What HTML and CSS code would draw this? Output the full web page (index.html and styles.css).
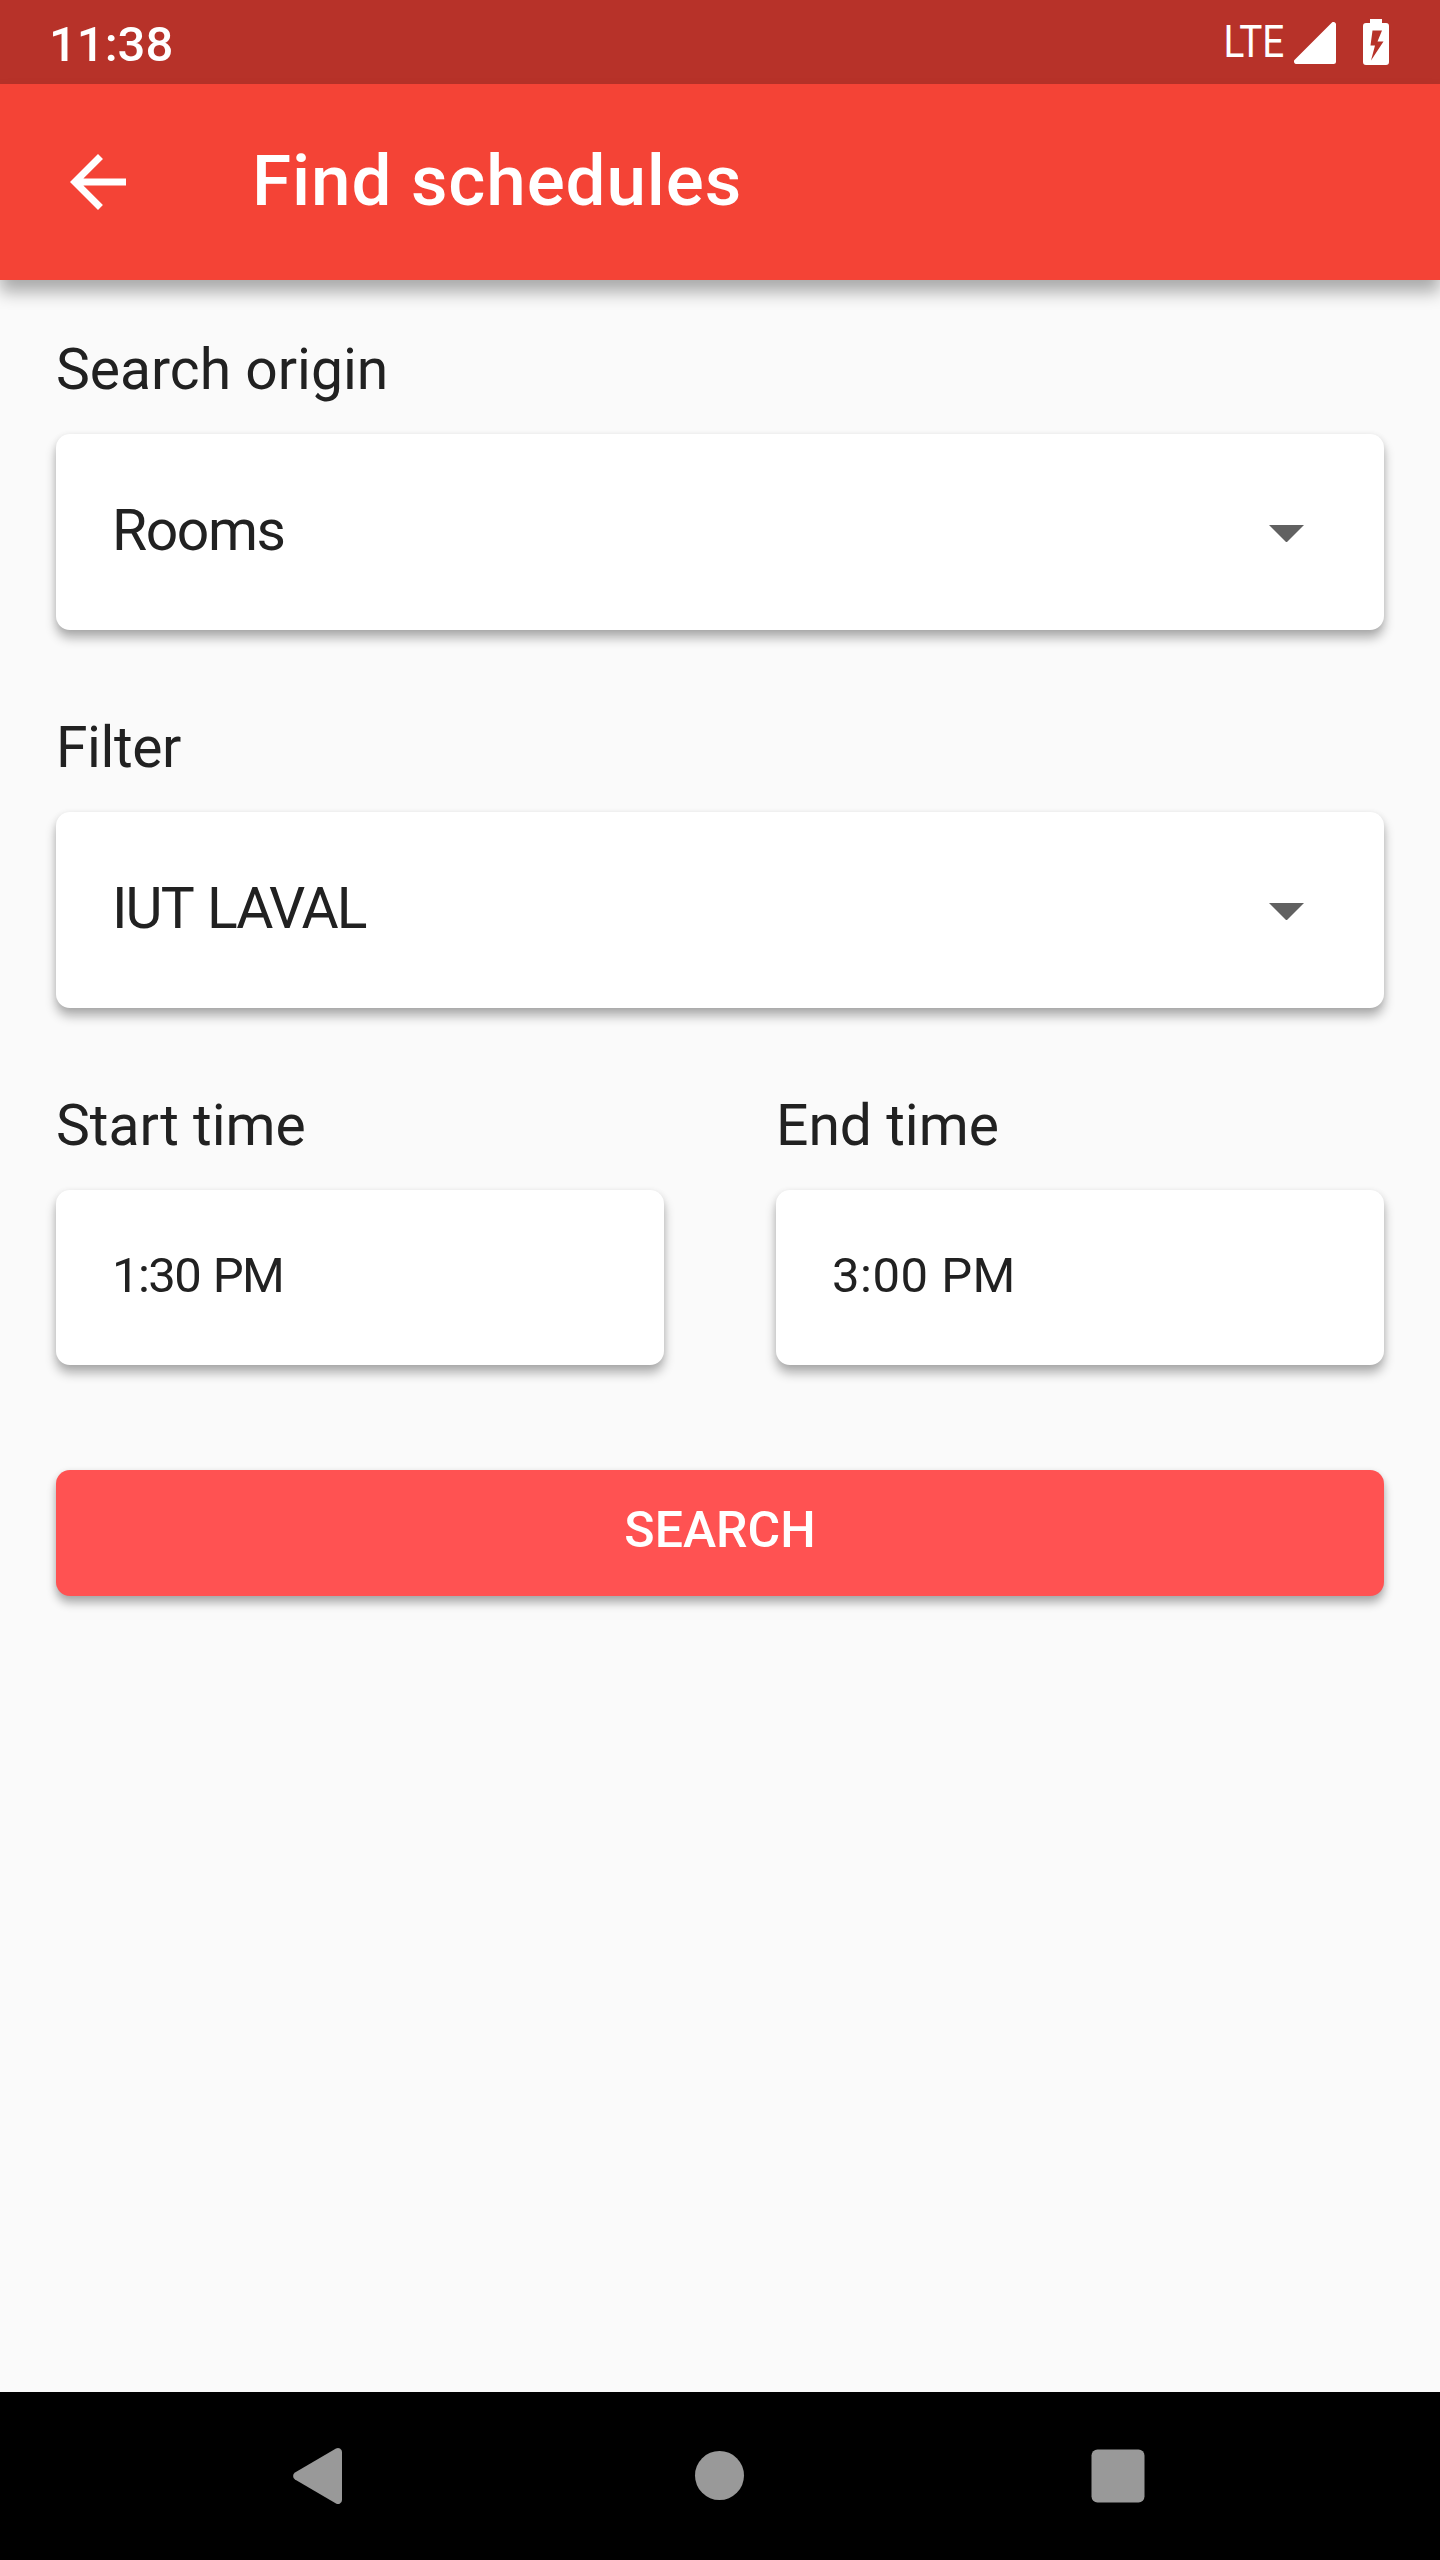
FILE: index.html
```html
<!DOCTYPE html>
<html lang="en">
  <head>
    <meta charset="UTF-8" />
    <meta name="viewport" content="width=device-width, initial-scale=1.0" />
    <title>Find schedules</title>
    <link rel="stylesheet" href="styles.css">
  </head>
  <body>
    <div class="status-bar">
      <span class="clock">11:38</span>
      <div class="status-icons">
        <span class="network">LTE</span>
        <svg class="signal" viewBox="0 0 42 42">
          <path d="M42 2.5V39.500a2.500 2.500 0 0 1-2.500 2.500H2.500a2.500 2.500 0 0 1-1.800-4.300L37.700 0.700a2.500 2.500 0 0 1 4.300 1.800z" />
        </svg>
        <svg class="battery" viewBox="0 0 26 46">
          <path fill-rule="evenodd" d="M7 0h12v4h4a3 3 0 0 1 3 3v36a3 3 0 0 1-3 3H3a3 3 0 0 1-3-3V7a3 3 0 0 1 3-3h4zM9.500 11.500L7.500 26.500H12L8 41.500L20.500 22.500H14.500L19 11.500z" />
        </svg>
      </div>
    </div>

    <header class="app-bar">
      <button type="button" class="back" aria-label="Back">
        <svg viewBox="0 0 24 24">
          <path d="M20 11H7.830l5.590-5.590L12 4l-8 8 8 8 1.410-1.410L7.830 13H20v-2z" />
        </svg>
      </button>
      <h1 class="title">Find schedules</h1>
    </header>

    <main class="form">
      <div class="field">
        <span class="label">Search origin</span>
        <div class="card select">
          <span class="room">Rooms</span>
          <svg class="arrow" viewBox="0 0 35 17.500"><path d="M0 0h35L17.500 17.500z" /></svg>
        </div>
      </div>

      <div class="field">
        <span class="label filter">Filter</span>
        <div class="card select">
          <span class="site">IUT LAVAL</span>
          <svg class="arrow" viewBox="0 0 35 17.500"><path d="M0 0h35L17.500 17.500z" /></svg>
        </div>
      </div>

      <div class="times">
        <div class="field">
          <span class="label">Start time</span>
          <div class="card time start">1:30 PM</div>
        </div>
        <div class="field">
          <span class="label">End time</span>
          <div class="card time end">3:00 PM</div>
        </div>
      </div>

      <button type="button" class="search">SEARCH</button>
    </main>

    <nav class="nav-bar">
      <svg viewBox="0 0 84 84">
        <path d="M63 18V66a4 4 0 0 1-6 3.400L16 45.400a4 4 0 0 1 0-6.800L57 14.600a4 4 0 0 1 6 3.400z" />
      </svg>
      <svg viewBox="0 0 84 84"><circle cx="41.500" cy="41.500" r="24.500" /></svg>
      <svg viewBox="0 0 84 84"><rect x="14.500" y="15.500" width="53" height="53" rx="6" /></svg>
    </nav>
  </body>
</html>
```
FILE: styles.css
```css
* {
  box-sizing: border-box;
}

body {
  margin: 0;
  height: 2560px;
  display: flex;
  flex-direction: column;
  background-color: #fafafa;
  color: #212121;
  font-family: Roboto, sans-serif;
}

svg {
  display: block;
  fill: currentColor;
}

button {
  border: none;
  padding: 0;
  color: #fff;
  font-family: inherit;
}

.status-bar {
  display: flex;
  justify-content: space-between;
  align-items: center;
  height: 84px;
  padding: 0 51px 0 49px;
  background-color: #b73229;
  color: #fff;
}

.clock {
  padding-top: 4px;
  font-size: 49px;
  font-weight: 500;
}

.status-icons {
  display: flex;
  align-items: center;
}

.network {
  font-size: 43.5px;
  transform: scaleX(0.89);
  transform-origin: right;
  margin-right: 10px;
}

.signal {
  width: 42px;
  height: 42px;
  margin: 2px 27px 0 0;
}

.battery {
  width: 26px;
  height: 46px;
}

.app-bar {
  display: flex;
  align-items: center;
  height: 196px;
  padding-left: 56px;
  background-color: #f44336;
  color: #fff;
  box-shadow: 0 12px 16px rgba(0, 0, 0, 0.32);
}

.back {
  background: none;
}

.back svg {
  width: 84px;
  height: 84px;
}

.title {
  margin: 0 0 0 112px;
  padding-bottom: 3px;
  font-size: 71px;
  font-weight: 500;
  letter-spacing: 0.9px;
}

.form {
  flex: 1;
  padding: 56px 56px 0;
}

.field {
  display: flex;
  flex-direction: column;
  gap: 31px;
  margin-bottom: 84px;
}

.label {
  font-size: 57px;
  line-height: 67px;
}

.filter {
  letter-spacing: -0.4px;
}

.card {
  display: flex;
  align-items: center;
  background-color: #fff;
  border-radius: 14px;
  box-shadow: 0 8px 11px rgba(0, 0, 0, 0.3), 0 1px 6px rgba(0, 0, 0, 0.08);
}

.select {
  justify-content: space-between;
  height: 196px;
  padding: 0 80px 0 56px;
  font-size: 57px;
}

.select span {
  padding-bottom: 3px;
}

.room {
  letter-spacing: -1.4px;
}

.site {
  letter-spacing: -1.9px;
  word-spacing: 3px;
}

.arrow {
  width: 35px;
  height: 17.5px;
  margin-top: 3px;
  color: #616161;
}

.times {
  display: grid;
  grid-template-columns: 1fr 1fr;
  gap: 112px;
}

.times .field {
  margin-bottom: 105px;
}

.time {
  height: 175px;
  padding: 0 56px 4px;
  font-size: 49px;
}

.start {
  letter-spacing: -1.6px;
  word-spacing: 2px;
}

.end {
  letter-spacing: 0.5px;
}

.search {
  display: block;
  width: 100%;
  height: 126px;
  padding-bottom: 6px;
  border-radius: 14px;
  background-color: #ff5252;
  box-shadow: 0 7px 10px rgba(0, 0, 0, 0.3), 0 1px 6px rgba(0, 0, 0, 0.08);
  font-size: 50px;
  font-weight: 500;
}

.nav-bar {
  display: flex;
  justify-content: center;
  align-items: center;
  gap: 315px;
  height: 168px;
  background-color: #000;
  color: #999;
}

.nav-bar svg {
  width: 84px;
  height: 84px;
}
```
